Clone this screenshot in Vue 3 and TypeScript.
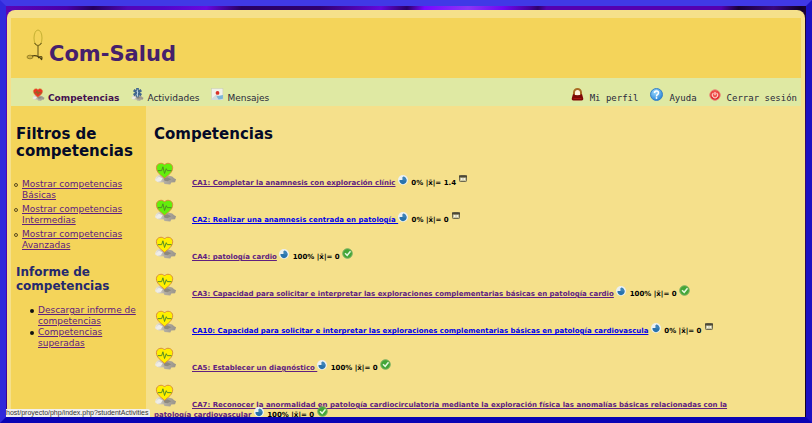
<script setup lang="ts">
interface Competence {
  code: string
  title: string
  percent: number
  mean: string
  level: 'basic' | 'medium'
  visited: boolean
  done: boolean
}

const competences: Competence[] = [
  { code: 'CA1', title: 'Completar la anamnesis con exploración clínic', percent: 0, mean: '1.4', level: 'basic', visited: true, done: false },
  { code: 'CA2', title: 'Realizar una anamnesis centrada en patología ', percent: 0, mean: '0', level: 'basic', visited: false, done: false },
  { code: 'CA4', title: 'patología cardio', percent: 100, mean: '0', level: 'medium', visited: true, done: true },
  { code: 'CA3', title: 'Capacidad para solicitar e interpretar las exploraciones complementarias básicas en patología cardio', percent: 100, mean: '0', level: 'medium', visited: true, done: true },
  { code: 'CA10', title: 'Capacidad para solicitar e interpretar las exploraciones complementarias básicas en patología cardiovascula', percent: 0, mean: '0', level: 'medium', visited: false, done: false },
  { code: 'CA5', title: 'Establecer un diagnóstico ', percent: 100, mean: '0', level: 'medium', visited: true, done: true },
  { code: 'CA7', title: 'Reconocer la anormalidad en patología cardiocirculatoria mediante la exploración física las anomalías básicas relacionadas con la patología cardiovascular', percent: 100, mean: '0', level: 'medium', visited: true, done: true },
]

const filters: string[] = ['Básicas', 'Intermedias', 'Avanzadas']
const reports: string[] = ['Descargar informe de competencias', 'Competencias superadas']
</script>

<template>
  <div class="screen">
    <svg class="defs" width="0" height="0" aria-hidden="true">
      <defs>
        <linearGradient id="silver" x1="0" y1="0" x2="1" y2="0">
          <stop offset="0" stop-color="#efece6" />
          <stop offset="0.45" stop-color="#b3aea4" />
          <stop offset="1" stop-color="#99948a" />
        </linearGradient>
        <radialGradient id="blue" cx="0.4" cy="0.3" r="0.7">
          <stop offset="0" stop-color="#9fdcff" />
          <stop offset="1" stop-color="#2a86d8" />
        </radialGradient>
        <radialGradient id="red" cx="0.5" cy="0.4" r="0.6">
          <stop offset="0" stop-color="#ff7468" />
          <stop offset="1" stop-color="#d81c22" />
        </radialGradient>
        <symbol id="base" viewBox="0 0 24 24">
          <path d="M4 14l6-1 9 2 2 2 2 1-1 3-4 .5-1 2-6-.500-1-2-5 .5-4-2.500 1-3z" fill="url(#silver)" />
          <path d="M2 18.500l3-3 4 1.500-2 3-4 .5z" fill="#efede8" />
          <path d="M10 17l4-1 4 2-4 2-3-.5z" fill="#8d897f" />
        </symbol>
        <symbol id="heart" viewBox="0 0 24 24">
          <path d="M11 17C7.500 14 2.500 11 2.500 6 2.500 1 9 0 11 3 13 0 19.500 1 19.500 6 19.500 11 14.500 14 11 17z" stroke="#d88a3c" stroke-width="1" />
          <path d="M4 9h4l1.300-4 1.700 7 1.800-5 1 2h4.500" fill="none" stroke="#4e8a25" stroke-width="1" />
        </symbol>
        <symbol id="pie" viewBox="0 0 10 10">
          <circle cx="5" cy="5" r="5" fill="#eaf1f3" />
          <path d="M4.500 2v3h-3a3.600 3.600 0 1 0 3-3z" fill="#2873ad" />
          <path d="M5 1.500a3.500 3.500 0 0 1 3.300 4H5z" fill="#3c83b8" />
        </symbol>
        <symbol id="check" viewBox="0 0 11 11">
          <circle cx="5.500" cy="5.500" r="4.800" fill="#43a637" stroke="#7db164" />
          <path d="M3 5.300l2.200 2 3.300-4" fill="none" stroke="#e6f8e0" stroke-width="1.500" />
        </symbol>
        <symbol id="calendar" viewBox="0 0 8 8">
          <rect x="0.500" y="0.500" width="7" height="6" rx="0.800" fill="#c9c5a0" stroke="#6d684f" />
          <path d="M0 1.500h8" stroke="#4c4836" stroke-width="2" />
          <path d="M2 4h1.500M4.500 4h1.500" stroke="#fff" stroke-width="1.500" />
        </symbol>
      </defs>
    </svg>

    <div class="page">
      <header class="banner">
        <svg class="logo" viewBox="0 0 18 33" aria-hidden="true">
          <ellipse cx="12" cy="9" rx="4" ry="8" fill="none" stroke="#c4b032" />
          <path d="M8.500 14q3.500 5 7 0M12 17v10" fill="none" stroke="#6d5c1a" stroke-width="1.100" />
          <ellipse cx="4" cy="28" rx="3" ry="1.800" fill="#cfb040" stroke="#9c8528" />
          <path d="M6 27c4-1 7 0 10 4M12 29q4-3 4 0l-1 2" fill="none" stroke="#4d4010" stroke-width="1.200" />
        </svg>
        <h1>Com-Salud</h1>
      </header>

      <nav class="nav" aria-label="Principal">
        <div class="menu">
          <a href="#competencias" class="item current">
            <svg class="icon13" viewBox="0 0 24 24"><use href="#base" /><use href="#heart" fill="#ee3426" /></svg>
            <span>Competencias</span>
          </a>
          <a href="#actividades" class="item">
            <svg class="icon13" viewBox="0 0 24 24">
              <use href="#base" />
              <path d="M12 0v17M5 4l14 9M19 4L5 13" stroke="#41668d" stroke-width="5" />
              <path d="M12 3v13M10 6q5 1 2 4t1 5" fill="none" stroke="#c5d8e8" stroke-width="1.500" />
            </svg>
            <span>Actividades</span>
          </a>
          <a href="#mensajes" class="item">
            <svg class="icon13" viewBox="0 0 24 24">
              <rect x="1" y="1" width="21" height="20" fill="#f1f1ea" stroke="#c9cdb7" />
              <path d="M1 20l9-8 12 8v2H1z" fill="#d3dcdc" />
              <circle cx="12" cy="9" r="3.500" fill="#d93028" />
              <path d="M10 15l12-2v7l-8 1z" fill="#7bb5d8" />
            </svg>
            <span>Mensajes</span>
          </a>
        </div>
        <div class="menu account">
          <a href="#perfil" class="item">
            <svg class="icon13" viewBox="0 0 26 26">
              <path d="M6 15V9a7 7 0 0 1 14 0v6" fill="#fff3df" stroke="#a96b25" stroke-width="4" />
              <path d="M4 12q9 5 18 0l2 7q2 6-3 6H5q-5 0-3-6z" fill="#7d0707" />
              <path d="M5 21h16" stroke="#a81511" stroke-width="2" />
            </svg>
            <span>Mi perfil</span>
          </a>
          <a href="#ayuda" class="item">
            <svg class="icon13" viewBox="0 0 26 26">
              <circle cx="13" cy="13" r="12" fill="url(#blue)" stroke="#3a82c4" stroke-width="2" />
              <path d="M9 10q0-4 4-4t4 4q0 2-2 3t-2 4" fill="none" stroke="#fff" stroke-width="3" />
              <circle cx="13" cy="20" r="1.800" fill="#fff" />
            </svg>
            <span>Ayuda</span>
          </a>
          <a href="#salir" class="item">
            <svg class="icon12" viewBox="0 0 24 24">
              <circle cx="12" cy="12" r="10.500" fill="url(#red)" stroke="#e98d7c" stroke-width="2" />
              <path d="M8.500 8a5.500 5.500 0 1 0 7 0M12 6v6" fill="none" stroke="#ffe4df" stroke-width="2" />
            </svg>
            <span>Cerrar sesión</span>
          </a>
        </div>
      </nav>

      <div class="columns">
        <aside class="sidebar">
          <h2>Filtros de competencias</h2>
          <ul class="filters">
            <li v-for="name in filters" :key="name"><a href="#filtro">Mostrar competencias {{ name }}</a></li>
          </ul>
          <h3>Informe de competencias</h3>
          <ul class="reports">
            <li v-for="name in reports" :key="name"><a href="#informe">{{ name }}</a></li>
          </ul>
        </aside>

        <main class="content">
          <h2>Competencias</h2>
          <div v-for="c in competences" :key="c.code" class="row">
            <svg class="level" :class="c.level" viewBox="0 0 24 24" aria-hidden="true"><use href="#base" /><use href="#heart" /></svg>
            <a href="#competencia" :class="{ fresh: !c.visited }">{{ c.code }}: {{ c.title }}</a>
            {{ ' ' }}<svg class="pie" aria-hidden="true"><use href="#pie" /></svg>
            {{ c.percent }}% |x̄|= {{ c.mean }}
            <svg v-if="c.done" class="check" aria-hidden="true"><use href="#check" /></svg>
            <svg v-else class="calendar" aria-hidden="true"><use href="#calendar" /></svg>
          </div>
        </main>
      </div>
    </div>
    <div class="status">host/proyecto/php/index.php?studentActivities</div>
  </div>
</template>

<style>
body {
  margin: 0;
}
</style>

<style scoped>
.screen {
  position: relative;
  box-sizing: border-box;
  height: 100vh;
  overflow: hidden;
  display: flex;
  flex-direction: column;
  padding: 4px 1px 0;
  border: 6px solid;
  border-color: #4039e6 #1b10c2 #0a04b4 #3029db;
  background: linear-gradient(100deg, #5a05b8 0, #4a00a8 7%, #25005e 10%, #5206b8 14%, #5206c8 18%, #6a08e0 23%, #280062 27%, #300070 36%, #6508dd 43%, #2b0068 46%, #7a08ff 48%, #8d35f5 53%, #7208f0 57%, #4a00a0 60%, #30006c 61%, #5500b0 62%, #5500b0 82%, #180038 84%, #3a0880 88%, #120028 91%, #3a0a78 95%, #100020 100%);
  font-family: "DejaVu Sans", sans-serif;
  font-size: 9px;
  line-height: 11px;
  color: #0a0a28;
}

.defs {
  position: absolute;
}

.page {
  flex: 1;
  min-height: 0;
  display: flex;
  flex-direction: column;
  padding: 8px 4px 0;
  border-radius: 8px 8px 0 0;
  background: #f5e08b;
}

.banner {
  flex: none;
  display: flex;
  align-items: flex-end;
  gap: 5px;
  height: 44px;
  padding: 0 15px 16px;
  background: #f4d45a;
}

.logo {
  width: 18px;
  height: 33px;
}

h1,
h2,
h3 {
  margin: 0;
}

h1 {
  font-size: 21px;
  line-height: 24px;
  color: #45206c;
  margin-bottom: -4px;
}

.nav {
  flex: none;
  display: flex;
  justify-content: space-between;
  align-items: flex-end;
  height: 26px;
  padding: 0 4px 2px 21px;
  background: #dfe9a3;
}

.menu {
  display: flex;
  align-items: baseline;
  gap: 12px;
}

.item {
  display: flex;
  align-items: baseline;
  gap: 3px;
  color: #28283a;
  text-decoration: none;
}

.item svg {
  margin-bottom: 1px;
}

.current {
  font-weight: bold;
  color: #43104f;
}

.account {
  gap: 12px;
  font-family: "DejaVu Sans Mono", monospace;
}

.account .item {
  gap: 6px;
}

.icon12 {
  width: 12px;
  height: 12px;
}

.icon13 {
  width: 13px;
  height: 13px;
}

.columns {
  flex: 1;
  min-height: 0;
  display: grid;
  grid-template-columns: 135px 1fr;
}

h2 {
  font-size: 15px;
  line-height: 17px;
  color: #040a28;
}

h3 {
  font-size: 12px;
  line-height: 14px;
  color: #25296e;
  margin: 14px 0 12px;
}

.sidebar {
  padding: 20px 5px 0;
  background: #f4d45a;
}

a {
  color: #602080;
}

ul {
  margin: 0;
}

.filters {
  display: flex;
  flex-direction: column;
  gap: 3px;
  margin-top: 19px;
  padding: 0 0 0 6px;
  list-style: none;
}

.filters li {
  position: relative;
}

.filters li::before {
  content: "";
  position: absolute;
  left: -8px;
  top: 4px;
  width: 2px;
  height: 2px;
  border: 1px solid #5a4a20;
  border-radius: 50%;
}

.reports {
  padding: 0 0 0 22px;
  list-style: none;
}

.reports li {
  position: relative;
}

.reports li::before {
  content: "";
  position: absolute;
  left: -8px;
  top: 4px;
  width: 4px;
  height: 4px;
  border-radius: 50%;
  background: #111;
}

.content {
  min-width: 0;
  overflow: hidden;
  padding: 20px 44px 0 8px;
}

.content h2 {
  margin-bottom: 19px;
}

.row {
  margin-bottom: 11px;
  font-size: 7px;
  line-height: 10px;
  font-weight: bold;
  color: #000;
}

.row .fresh {
  color: #0000e8;
}

.level {
  width: 23px;
  height: 23px;
  margin-right: 13px;
}

.row a {
  margin-left: 2px;
}

.basic {
  fill: #63ee0c;
}

.medium {
  fill: #fff000;
}

.pie {
  width: 10px;
  height: 10px;
  margin-top: -4px;
  margin-right: 1px;
}

.check {
  width: 11px;
  height: 11px;
  margin-top: -4px;
}

.calendar {
  width: 8px;
  height: 8px;
  margin-left: 1px;
  vertical-align: 2px;
}

.status {
  position: absolute;
  left: 0;
  bottom: 0;
  padding-right: 2px;
  border-radius: 0 2px 0 0;
  background: #f2f0ee;
  color: #333;
  font-family: "Liberation Sans", sans-serif;
  font-size: 7px;
  line-height: 8px;
}
</style>
